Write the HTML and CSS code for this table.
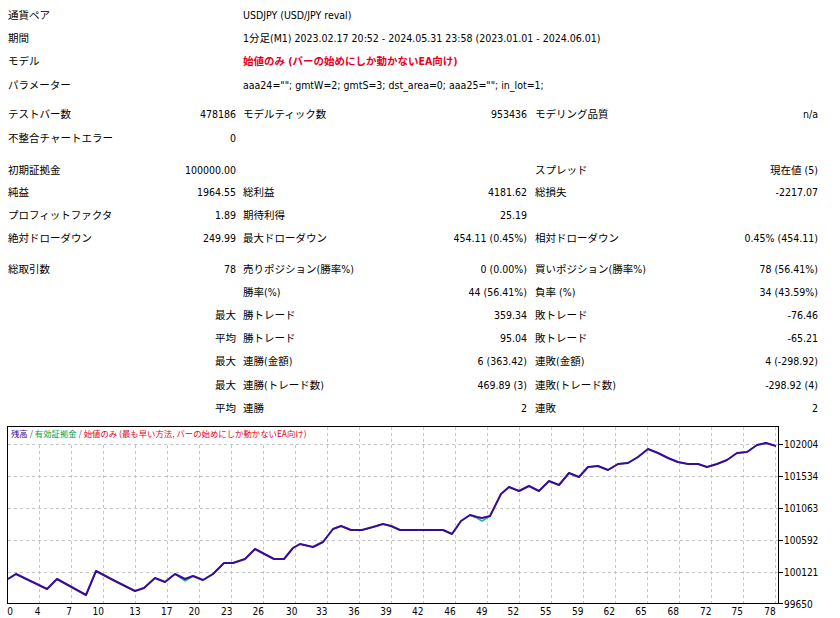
FILE: index.html
```html
<!DOCTYPE html>
<html lang="ja">
<head>
<meta charset="utf-8">
<title>Strategy Tester Report</title>
<link rel="stylesheet" href="styles.css">
</head>
<body>
<div class="report">
  <div class="grp g1">
    <div class="l">通貨ペア</div><div class="wide">USDJPY (USD/JPY reval)</div>
    <div class="l">期間</div><div class="wide">1分足(M1) 2023.02.17 20:52 - 2024.05.31 23:58 (2023.01.01 - 2024.06.01)</div>
    <div class="l">モデル</div><div class="wide red">始値のみ (バーの始めにしか動かないEA向け)</div>
    <div class="l">パラメーター</div><div class="wide">aaa24=""; gmtW=2; gmtS=3; dst_area=0; aaa25=""; in_lot=1;</div>
  </div>
  <div class="grp g2">
    <div class="l">テストバー数</div><div class="v">478186</div><div class="l c3">モデルティック数</div><div class="v">953436</div><div class="l c5">モデリング品質</div><div class="v">n/a</div>
    <div class="l">不整合チャートエラー</div><div class="v">0</div><div class="l c3"></div><div class="v"></div><div class="l c5"></div><div class="v"></div>
  </div>
  <div class="grp g3">
    <div class="l">初期証拠金</div><div class="v">100000.00</div><div class="l c3"></div><div class="v"></div><div class="l c5">スプレッド</div><div class="v">現在値 (5)</div>
    <div class="l">純益</div><div class="v">1964.55</div><div class="l c3">総利益</div><div class="v">4181.62</div><div class="l c5">総損失</div><div class="v">-2217.07</div>
    <div class="l">プロフィットファクタ</div><div class="v">1.89</div><div class="l c3">期待利得</div><div class="v">25.19</div><div class="l c5"></div><div class="v"></div>
    <div class="l">絶対ドローダウン</div><div class="v">249.99</div><div class="l c3">最大ドローダウン</div><div class="v">454.11 (0.45%)</div><div class="l c5">相対ドローダウン</div><div class="v">0.45% (454.11)</div>
  </div>
  <div class="grp g4">
    <div class="l">総取引数</div><div class="v">78</div><div class="l c3">売りポジション(勝率%)</div><div class="v">0 (0.00%)</div><div class="l c5">買いポジション(勝率%)</div><div class="v">78 (56.41%)</div>
    <div class="l"></div><div class="v"></div><div class="l c3">勝率(%)</div><div class="v">44 (56.41%)</div><div class="l c5">負率 (%)</div><div class="v">34 (43.59%)</div>
    <div class="l"></div><div class="v">最大</div><div class="l c3">勝トレード</div><div class="v">359.34</div><div class="l c5">敗トレード</div><div class="v">-76.46</div>
    <div class="l"></div><div class="v">平均</div><div class="l c3">勝トレード</div><div class="v">95.04</div><div class="l c5">敗トレード</div><div class="v">-65.21</div>
    <div class="l"></div><div class="v">最大</div><div class="l c3">連勝(金額)</div><div class="v">6 (363.42)</div><div class="l c5">連敗(金額)</div><div class="v">4 (-298.92)</div>
    <div class="l"></div><div class="v">最大</div><div class="l c3">連勝(トレード数)</div><div class="v">469.89 (3)</div><div class="l c5">連敗(トレード数)</div><div class="v">-298.92 (4)</div>
    <div class="l"></div><div class="v">平均</div><div class="l c3">連勝</div><div class="v">2</div><div class="l c5">連敗</div><div class="v">2</div>
  </div>
</div>
<svg class="chart" width="840" height="198" viewBox="0 420 840 198" xmlns="http://www.w3.org/2000/svg">
  <rect x="7.5" y="426.5" width="771" height="177" fill="#fff" stroke="#000" stroke-width="1"/>
  <g class="grid" stroke="#c4c4c4" stroke-width="1" stroke-dasharray="3 3" fill="none">
    <path d="M8 444.5H778M8 476.5H778M8 508.5H778M8 540.5H778M8 572.5H778"/>
    <path d="M39.5 427V603M71.5 427V603M103.5 427V603M135.5 427V603M167.5 427V603M199.5 427V603M231.5 427V603M263.5 427V603M295.5 427V603M327.5 427V603M359.5 427V603M391.5 427V603M423.5 427V603M455.5 427V603M487.5 427V603M519.5 427V603M551.5 427V603M583.5 427V603M615.5 427V603M647.5 427V603M679.5 427V603M711.5 427V603M743.5 427V603M775.5 427V603"/>
  </g>
  <rect x="8" y="427" width="304" height="16" fill="#fff"/>
  <text class="legend" x="11" y="436.5"><tspan fill="#3300a0">残高</tspan><tspan fill="#555"> / </tspan><tspan fill="#00a040">有効証拠金</tspan><tspan fill="#555"> / </tspan><tspan fill="#e8001c">始値のみ (最も早い方法, バーの始めにしか動かないEA向け)</tspan></text>
  <polyline fill="none" stroke="#20b890" stroke-width="1.5" stroke-linejoin="round" points="8,579 16,574 47,589 57,579 86,595 96,571 115,581 135,591 144,588 155,578 165,582 175,574 185,581 193,576 203,580 213,574 224,563 233,563 245,559 255,549 274,559 284,559 293,548 300,544 313,547 323,542 333,529 341,526 351,530 362,530 373,527 383,524 391,526 400,530 443,530 452,534 461,521 470,515 477,518 482,521 490,516 501,494 509,487 519,491 529,486 539,491 549,481 559,485 569,473 579,477 588,467 598,466 608,470 618,464 628,463 638,457 648,449 658,453 668,458 677,462 688,464 698,464 707,467 717,464 727,460 737,453 747,452 757,445 766,443 776,446"/>
  <polyline fill="none" stroke="#3b0a96" stroke-width="2" stroke-linejoin="round" points="8,579 16,574 47,589 57,579 86,595 96,571 115,581 135,591 144,588 155,578 165,582 175,574 185,579 193,576 203,580 213,574 224,563 233,563 245,559 255,549 274,559 284,559 293,548 300,544 313,547 323,542 333,529 341,526 351,530 362,530 373,527 383,524 391,526 400,530 443,530 452,534 461,521 470,515 477,517 482,518 490,516 501,494 509,487 519,491 529,486 539,491 549,481 559,485 569,473 579,477 588,467 598,466 608,470 618,464 628,463 638,457 648,449 658,453 668,458 678,462 688,464 698,464 707,467 717,464 727,460 737,453 747,452 757,445 766,443 776,446"/>
  <path d="M779 444.5H783M779 476.5H783M779 508.5H783M779 540.5H783M779 572.5H783M779 603.5H783" stroke="#000" stroke-width="1"/>
  <g class="ylab">
    <text x="784" y="448">102004</text>
    <text x="784" y="480">101534</text>
    <text x="784" y="512">101063</text>
    <text x="784" y="544">100592</text>
    <text x="784" y="576">100121</text>
    <text x="784" y="608">99650</text>
  </g>
  <g class="xlab">
    <text x="10" y="615">0</text>
    <text x="37.7" y="615">4</text>
    <text x="69" y="615">7</text>
    <text x="98.3" y="615">10</text>
    <text x="135" y="615">13</text>
    <text x="166.7" y="615">17</text>
    <text x="194.3" y="615">20</text>
    <text x="226.7" y="615">23</text>
    <text x="258.3" y="615">26</text>
    <text x="291.7" y="615">30</text>
    <text x="321.7" y="615">33</text>
    <text x="354" y="615">36</text>
    <text x="386" y="615">39</text>
    <text x="417.7" y="615">42</text>
    <text x="450" y="615">46</text>
    <text x="481.7" y="615">49</text>
    <text x="513.3" y="615">52</text>
    <text x="545.7" y="615">55</text>
    <text x="577.7" y="615">59</text>
    <text x="609.3" y="615">62</text>
    <text x="641" y="615">65</text>
    <text x="673.3" y="615">68</text>
    <text x="705.7" y="615">72</text>
    <text x="737.3" y="615">75</text>
    <text x="770" y="615">78</text>
  </g>
</svg>
</body>
</html>
```

FILE: styles.css
```css
html, body {
  margin: 0;
  padding: 0;
  background: #fff;
}

body {
  width: 840px;
  height: 618px;
  overflow: hidden;
  font-family: "DejaVu Sans Condensed", "DejaVu Sans", "Noto Sans CJK JP", sans-serif;
  font-stretch: semi-condensed;
  font-size: 10.5px;
  color: #000;
}

.report {
  padding-left: 8px;
  width: 810px;
}

.grp {
  display: grid;
  grid-template-columns: 112px 116px 147px 144px 148px 143px;
}

.grp > div {
  white-space: nowrap;
}

.g1 {
  padding-top: 3.8px;
  grid-auto-rows: 23.3px;
  line-height: 23.3px;
}

.g2 {
  margin-top: 5.2px;
  grid-auto-rows: 24px;
  line-height: 24px;
}

.g3 {
  margin-top: 8.6px;
  grid-auto-rows: 22.7px;
  line-height: 22.7px;
}

.g4 {
  margin-top: 8.2px;
  grid-auto-rows: 23.2px;
  line-height: 23.2px;
}

.wide {
  grid-column: 3 / 7;
  padding-left: 7px;
}

.red {
  color: #e8001c;
  font-weight: bold;
}

.v {
  text-align: right;
}

.c3 {
  padding-left: 7px;
}

.c5 {
  padding-left: 8px;
}

.chart {
  display: block;
}

.legend {
  font-family: "Noto Sans CJK JP", sans-serif;
  font-size: 8.4px;
}

.ylab text {
  font-size: 10px;
  fill: #000;
}

.xlab text {
  font-size: 10px;
  fill: #000;
  text-anchor: middle;
}
```
